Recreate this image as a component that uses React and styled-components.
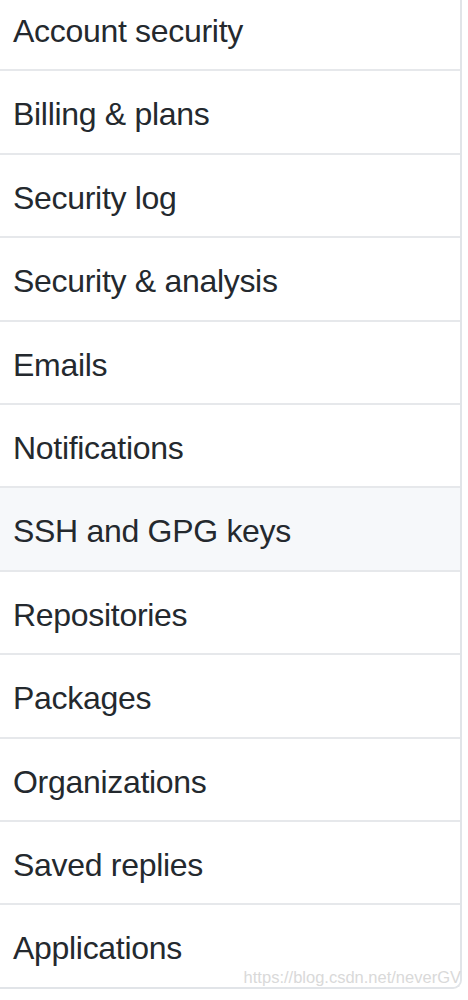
import React from "react";
import styled, { createGlobalStyle } from "styled-components";

const Global = createGlobalStyle`
  html, body { margin: 0; padding: 0; background: #ffffff; }
  body { font-family: "Liberation Sans", Arial, sans-serif; }
`;

const Page = styled.div`
  position: relative;
  width: 468px;
  height: 1000px;
  overflow: hidden;
  background: #ffffff;
`;

const Menu = styled.nav`
  display: flex;
  flex-direction: column;
  width: 460px;
  margin-top: -12px;
  border-right: 2px solid #e1e4e8;
  border-bottom: 2px solid #e1e4e8;
  border-bottom-right-radius: 9px;
  background: #ffffff;
`;

const Item = styled.a`
  display: block;
  box-sizing: border-box;
  height: ${(p) => (p.$last ? "81.4px" : "83.4px")};
  padding: 23px 12px 0 13px;
  font-size: 32px;
  letter-spacing: -0.3px;
  line-height: 40px;
  color: #24292e;
  text-decoration: none;
  background: ${(p) => (p.$selected ? "#f6f8fa" : "#ffffff")};
  border-bottom: ${(p) => (p.$last ? "none" : "2px solid #e6e8eb")};
  border-bottom-right-radius: ${(p) => (p.$last ? "8px" : "0")};
`;

const Watermark = styled.span`
  position: absolute;
  right: 7px;
  top: 968px;
  font-family: "Liberation Sans", Arial, sans-serif;
  font-size: 16.5px;
  color: #d9d9d9;
`;

const items = [
  "Account security",
  "Billing & plans",
  "Security log",
  "Security & analysis",
  "Emails",
  "Notifications",
  "SSH and GPG keys",
  "Repositories",
  "Packages",
  "Organizations",
  "Saved replies",
  "Applications",
];

export default function App() {
  return (
    <>
      <Global />
      <Page>
        <Menu>
          {items.map((label, i) => (
            <Item
              key={label}
              href="#"
              $selected={label === "SSH and GPG keys"}
              $last={i === items.length - 1}
            >
              {label}
            </Item>
          ))}
        </Menu>
        <Watermark>https://blog.csdn.net/neverGV</Watermark>
      </Page>
    </>
  );
}
